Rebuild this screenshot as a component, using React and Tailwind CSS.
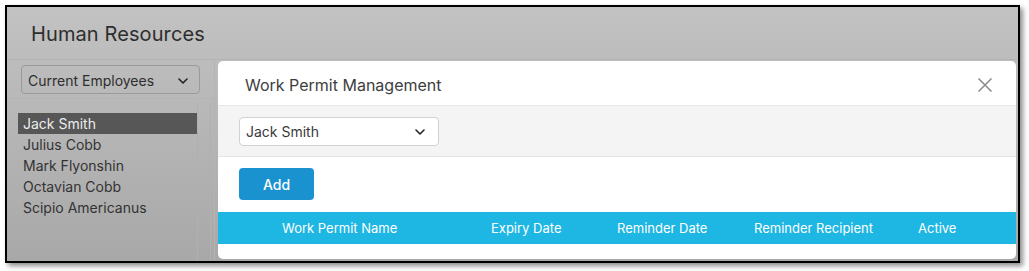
import React from "react";

const Chevron = ({ className = "" }) => (
  <svg width="12" height="12" viewBox="0 0 12 12" className={className} fill="none">
    <path d="M2 4l4 4 4-4" stroke="currentColor" strokeWidth="1.6" strokeLinecap="round" strokeLinejoin="round" />
  </svg>
);

export default function App() {
  const names = ["Jack Smith", "Julius Cobb", "Mark Flyonshin", "Octavian Cobb", "Scipio Americanus"];
  return (
    <div className="w-[1029px] h-[271px] bg-white pt-[5px] pl-[5px]" style={{ fontFamily: "Inter, 'Noto Sans', sans-serif" }}>
      <div className="relative w-[1015px] h-[258px] border-2 border-black shadow-[3px_3px_5px_rgba(0,0,0,0.45)] overflow-hidden bg-gradient-to-b from-[#c2c2c2] to-[#a8a8a8]">
        {/* page header */}
        <div className="h-[53px] border-b border-[#b4b4b4] flex items-center pl-[24px] pt-[1px]">
          <span className="text-[20px] text-[#2e2e2e] tracking-[0.1px]">Human Resources</span>
        </div>
        {/* left column */}
        <div className="w-[208px] h-[200px] border-r border-[#b4b4b4]">
          <div className="h-[39px] border-b border-[#b4b4b4] pl-[14px] pt-[5px]">
            <div className="w-[179px] h-[29px] rounded-[4px] border border-[#9a9a9a] flex items-center justify-between pl-[6px] pr-[10px] pt-[2px] text-[14px] text-[#2e2e2e]">
              <span>Current Employees</span>
              <Chevron className="text-[#222]" />
            </div>
          </div>
          <div className="flex pl-[11px] pt-[4px]">
            <div className="w-[179px] pt-[10px]">
              {names.map((n, i) => (
                <div
                  key={n}
                  className={`h-[21px] leading-[21px] pl-[5px] text-[14px] ${i === 0 ? "bg-[#575757] text-[#ececec]" : "text-[#333]"}`}
                >
                  {n}
                </div>
              ))}
            </div>
            <div className="w-[14px] h-[160px] border-x border-[#b0b0b0] ml-[0px]" />
          </div>
        </div>
        {/* modal */}
        <div className="absolute left-[211px] top-[54px] w-[798px] h-[198px] bg-white rounded-[5px] overflow-hidden">
          <div className="h-[45px] border-b border-[#e6e6e6] flex items-center justify-between pl-[27px] pr-[23px] pt-[3px]">
            <span className="text-[16px] text-[#3e3e3e]">Work Permit Management</span>
            <svg width="16" height="16" viewBox="0 0 16 16" className="text-[#8a8a8a]">
              <path d="M1.5 1.5l13 13M14.5 1.5l-13 13" stroke="currentColor" strokeWidth="1.5" />
            </svg>
          </div>
          <div className="h-[51px] bg-[#f4f4f4] border-b border-[#e6e6e6] pl-[21px] pt-[11px]">
            <div className="w-[200px] h-[29px] rounded-[4px] border border-[#d2d2d2] bg-white flex items-center justify-between pl-[6px] pr-[12px] text-[14px] text-[#3a3a3a]">
              <span>Jack Smith</span>
              <Chevron className="text-[#222]" />
            </div>
          </div>
          <div className="h-[55px] pl-[21px] pt-[11px]">
            <button className="w-[75px] h-[32px] rounded-[4px] bg-[#1a92d0] text-white text-[14px] font-medium">Add</button>
          </div>
          <div className="h-[32px] bg-[#1eb6e2] flex items-center text-white text-[13px] pl-[64px] pt-[2px]">
            <span className="w-[209px]">Work Permit Name</span>
            <span className="w-[126px]">Expiry Date</span>
            <span className="w-[137px]">Reminder Date</span>
            <span className="w-[164px]">Reminder Recipient</span>
            <span>Active</span>
          </div>
        </div>
      </div>
    </div>
  );
}
